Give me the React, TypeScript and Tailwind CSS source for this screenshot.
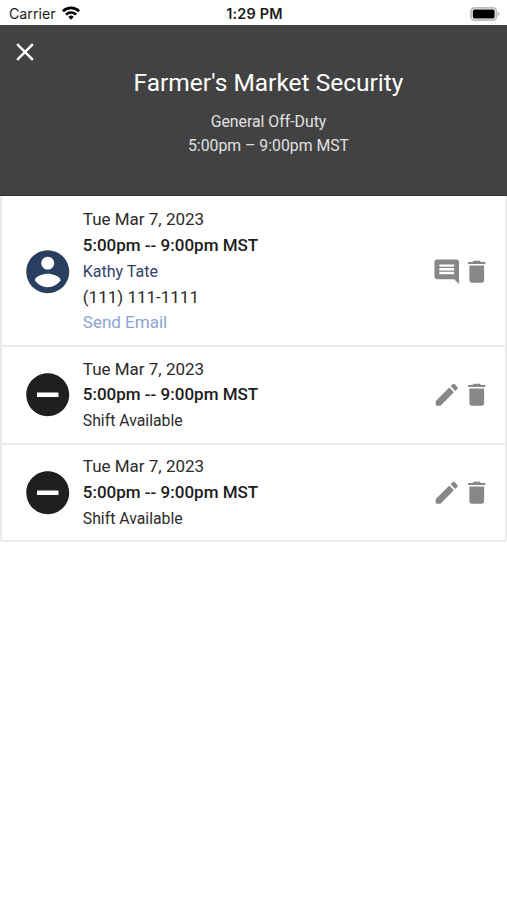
import type { ReactNode } from 'react'

interface Shift {
  id: number
  date: string
  time: string
  assignee?: { name: string; phone: string }
}

const SHIFTS: Shift[] = [
  {
    id: 1,
    date: 'Tue Mar 7, 2023',
    time: '5:00pm -- 9:00pm MST',
    assignee: { name: 'Kathy Tate', phone: '(111) 111-1111' },
  },
  { id: 2, date: 'Tue Mar 7, 2023', time: '5:00pm -- 9:00pm MST' },
  { id: 3, date: 'Tue Mar 7, 2023', time: '5:00pm -- 9:00pm MST' },
]

const ICONS = {
  account:
    'M12 2C6.48 2 2 6.48 2 12s4.48 10 10 10 10-4.48 10-10S17.52 2 12 2zm0 3c1.66 0 3 1.34 3 3s-1.34 3-3 3-3-1.34-3-3 1.34-3 3-3zm0 14.2c-2.5 0-4.71-1.28-6-3.22.03-1.99 4-3.08 6-3.08 1.99 0 5.97 1.09 6 3.08-1.29 1.94-3.5 3.22-6 3.22z',
  minus: 'M12 2C6.48 2 2 6.48 2 12s4.48 10 10 10 10-4.48 10-10S17.52 2 12 2zm5 11H7v-2h10v2z',
  comment:
    'M21.99 4c0-1.1-.89-2-1.99-2H4c-1.1 0-2 .9-2 2v12c0 1.1.9 2 2 2h14l4 4-.01-18zM18 14H6v-2h12v2zm0-3H6V9h12v2zm0-3H6V6h12v2z',
  edit: 'M3 17.6V20c0 .6.4 1 1 1h2.4c.3 0 .5-.1.7-.3L17.81 9.94l-3.75-3.75L3.3 16.9c-.2.2-.3.4-.3.7zM20.71 7.04c.39-.39.39-1.02 0-1.41l-2.34-2.34c-.39-.39-1.02-.39-1.41 0l-1.83 1.83 3.75 3.75 1.83-1.83z',
  trash: 'M6 19c0 1.1.9 2 2 2h8c1.1 0 2-.9 2-2V7H6v12zM19 4h-3.5l-1-1h-5l-1 1H5v1.6h14V4z',
  close:
    'M19 6.41L17.59 5 12 10.59 6.41 5 5 6.41 10.59 12 5 17.59 6.41 19 12 13.41 17.59 19 19 17.59 13.41 12z',
}

function Icon({ name, className }: { name: keyof typeof ICONS; className: string }) {
  return (
    <svg viewBox="0 0 24 24" fill="currentColor" className={`shrink-0 ${className}`} aria-hidden="true">
      <path d={ICONS[name]} />
    </svg>
  )
}

function IconButton({ label, children }: { label: string; children: ReactNode }) {
  return (
    <button type="button" aria-label={label}>
      {children}
    </button>
  )
}

function StatusBar() {
  return (
    <div className="grid h-[25px] grid-cols-3 items-center bg-white pt-[2px] pr-[7px] pl-[9px] font-['Inter',sans-serif] text-[#1c1c1c]">
      <div className="flex items-center gap-[6px]">
        <span className="text-[14.2px]">Carrier</span>
        <svg viewBox="0 0 18 14" className="h-[14px] w-[18px]" fill="none" stroke="#000" strokeWidth="2.6">
          <path d="M0.9 5.2a11.6 11.6 0 0 1 16.2 0" />
          <path d="M3.9 8.6a7.3 7.3 0 0 1 10.2 0" />
          <path d="M9 13.8l-2.7-2.9a3.8 3.8 0 0 1 5.4 0z" fill="#000" stroke="none" />
        </svg>
      </div>
      <span className="text-center text-[14.4px] font-semibold tracking-[0.2px]">1:29 PM</span>
      <svg viewBox="0 0 30 14" className="h-[14px] w-[30px] justify-self-end">
        <rect x="1" y="0.9" width="25.4" height="12.2" rx="3.6" fill="#fff" stroke="#bcbcbc" strokeWidth="1.8" />
        <rect x="2.8" y="2.6" width="21.8" height="8.8" rx="1.6" fill="#000" />
        <path d="M27.8 4.8c2.4.8 2.4 3.6 0 4.4z" fill="#bcbcbc" />
      </svg>
    </div>
  )
}

function ShiftRow({ shift }: { shift: Shift }) {
  const { assignee } = shift
  return (
    <li className="flex items-center border-b-2 border-[#ebebeb] pt-[9.6px] pr-[14px] pb-[9px] pl-[19.6px]">
      {assignee ? (
        <Icon name="account" className="size-[51.5px] text-[#293f5f]" />
      ) : (
        <Icon name="minus" className="size-[51.5px] text-[#1f1f1f]" />
      )}
      <div className="ml-[9.7px] flex-1 text-[15.8px] leading-[25.7px] text-[#2b2b2b]">
        <p className="text-[17px]">{shift.date}</p>
        <p className="text-[17px] font-medium text-[#1c1c1c]">{shift.time}</p>
        {assignee ? (
          <>
            <p className="text-[16px] text-[#2f4268]">{assignee.name}</p>
            <p className="text-[17px]">{assignee.phone}</p>
            <a className="block text-[17px] text-[#8ba5d0]">Send Email</a>
          </>
        ) : (
          <p>Shift Available</p>
        )}
      </div>
      <div className="flex text-[#878787]">
        <IconButton label={assignee ? 'Message' : 'Edit shift'}>
          <Icon name={assignee ? 'comment' : 'edit'} className="size-[29.5px]" />
        </IconButton>
        <IconButton label="Delete shift">
          <Icon name="trash" className="size-[29.5px]" />
        </IconButton>
      </div>
    </li>
  )
}

export default function App() {
  return (
    <div className="min-h-[900px] w-full bg-white font-['Roboto',sans-serif]">
      <StatusBar />
      <header className="flex h-[171px] items-start border-b border-[#333] bg-[#424242] pr-[10px] pl-[10px] text-white">
        <button type="button" aria-label="Close" className="mt-[12px]">
          <Icon name="close" className="size-[30px]" />
        </button>
        <div className="flex-1 pt-[40px] text-center">
          <h1 className="text-[24.5px] leading-[36px]">Farmer's Market Security</h1>
          <p className="mt-[9px] text-[15.8px] leading-[24px] text-[#e0e0e0]">General Off-Duty</p>
          <p className="text-[15.8px] leading-[24px] text-[#e0e0e0]">5:00pm – 9:00pm MST</p>
        </div>
      </header>
      <ul className="rounded-b border-x-2 border-[#ebebeb] pt-[1.8px]">
        {SHIFTS.map((shift) => (
          <ShiftRow key={shift.id} shift={shift} />
        ))}
      </ul>
    </div>
  )
}
